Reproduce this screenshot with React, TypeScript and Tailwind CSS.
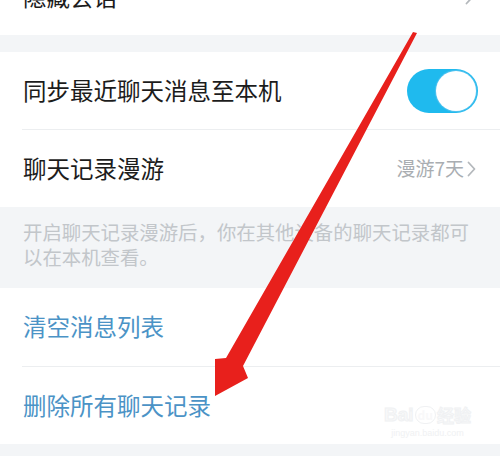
import React from 'react';

const font = { fontFamily: '"Noto Sans CJK SC", "Noto Sans", sans-serif' };

const Chevron: React.FC<{ className?: string }> = ({ className }) => (
  <svg className={className} width="9" height="16" viewBox="0 0 9 16" fill="none" stroke="#b4b8bc" strokeWidth="1.8" strokeLinecap="round" strokeLinejoin="round">
    <path d="M1.5 1.5l6 6.5-6 6.5" />
  </svg>
);

const Toggle: React.FC = () => (
  <div className="w-[71px] h-[44px] rounded-full bg-[#1fbaee] flex items-center justify-end pr-[2px]">
    <div className="w-[40px] h-[40px] rounded-full bg-white shadow-[0_0_1px_1px_rgba(120,200,240,0.6)]" />
  </div>
);

export default function App() {
  return (
    <div className="relative w-[500px] h-[456px] overflow-hidden bg-[#f3f5f7]" style={font}>
      {/* row cut off by the top edge */}
      <div className="-mt-[42px] h-[77px] bg-white flex items-center justify-between pl-[23px] pr-[26px]">
        <span className="text-[23.5px] text-[#1c1c1c]">隐藏会话</span>
        <Chevron />
      </div>

      <div className="h-[17px]" />

      <div className="bg-white">
        <div className="h-[77px] flex items-center justify-between pl-[23px] pr-[22px]">
          <span className="text-[23.5px] text-[#1c1c1c]">同步最近聊天消息至本机</span>
          <Toggle />
        </div>
        <div className="ml-[22px] h-px bg-[#eceef0]" />
        <div className="h-[77px] flex items-center justify-between pl-[23px] pr-[24px]">
          <span className="text-[23.5px] text-[#1c1c1c]">聊天记录漫游</span>
          <div className="flex items-center gap-[3px]">
            <span className="text-[19px] text-[#a9adb1]">漫游7天</span>
            <Chevron />
          </div>
        </div>
      </div>

      <div className="h-[81px] px-[23px] pt-[12px] text-[19.4px] leading-[25px] text-[#c2c6ca]">
        开启聊天记录漫游后，你在其他设备的聊天记录都可以在本机查看。
      </div>

      <div className="bg-white">
        <div className="h-[78px] flex items-center pl-[23px]">
          <span className="text-[23.5px] text-[#4b93c6]">清空消息列表</span>
        </div>
        <div className="ml-[22px] h-px bg-[#eceef0]" />
        <div className="h-[77px] flex items-center pl-[23px]">
          <span className="text-[23.5px] text-[#4b93c6]">删除所有聊天记录</span>
        </div>
      </div>

      {/* watermark */}
      <div className="absolute left-[384px] top-[405px] flex flex-col items-center gap-[2px] opacity-50 pointer-events-none">
        <div className="flex items-center gap-[1px] leading-[20px]">
          <span className="text-[19px] font-bold text-[#f2f3f5] [font-family:'Liberation_Sans',sans-serif]" style={{ WebkitTextStroke: '1px #e2e5e8' }}>Bai</span>
          <span className="text-[12px] leading-[16px] font-bold text-[#f2f3f5] rounded-full border border-[#e2e5e8] px-[2px]">du</span>
          <span className="text-[17px] font-bold text-[#f2f3f5]" style={{ WebkitTextStroke: '1px #e2e5e8' }}>经验</span>
        </div>
        <span className="text-[9px] text-[#e2e5e8] [font-family:'Liberation_Sans',sans-serif] leading-[12px]">jingyan.baidu.com</span>
      </div>

      {/* red annotation arrow */}
      <svg className="absolute left-0 top-0 pointer-events-none" width="500" height="456" viewBox="0 0 500 456">
        <polygon
          points="413,32 417,33 243,366 248,378 215,396 215,359 226,358"
          fill="#e8201c"
        />
      </svg>
    </div>
  );
}
